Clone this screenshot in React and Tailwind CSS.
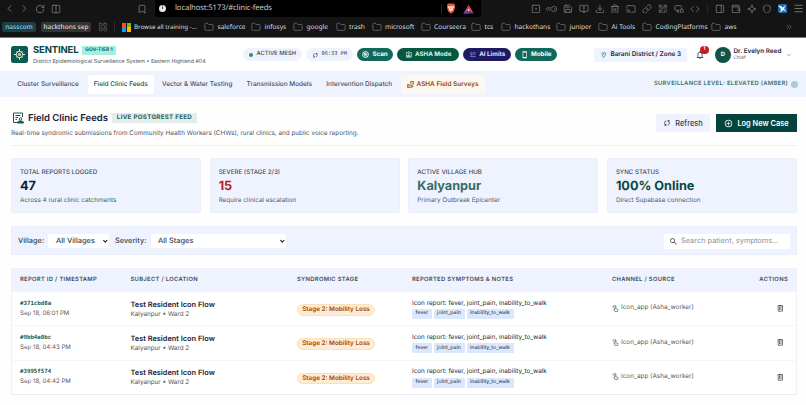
import React from "react";
import {
  ChevronLeft, ChevronRight, RotateCw, Columns2, Bookmark, LayoutGrid, Folder,
  SquareDot, KeyRound, Save, BookOpen, Download, Trash2, Cast, Link, QrCode,
  MonitorSmartphone, Code, PanelRight, Wallet, Sparkle, Shield, Menu, ChevronsRight, ChevronDown,
} from "lucide-react";
import {
  MdOutlineAssignmentInd, MdTune, MdOutlineSmartphone, MdOutlineLocationOn,
  MdOutlineNotifications, MdOutlineAddCircleOutline, MdSearch,
} from "react-icons/md";

const SYNC = "M160-160v-80h110l-16-14q-52-46-73-105t-21-119q0-111 66.5-197.5T400-790v84q-72 26-116 88.5T240-478q0 45 17 87.5t53 78.5l10 10v-98h80v240H160Zm400-10v-84q72-26 116-88.5T720-482q0-45-17-87.5T650-648l-10-10v98h-80v-240h240v80H690l16 14q49 49 71.5 106.5T800-482q0 111-66.5 197.5T560-170Z";
const TRASH = "M280-120q-33 0-56.5-23.5T200-200v-520h-40v-80h200v-40h240v40h200v80h-40v520q0 33-23.5 56.5T680-120H280Zm400-600H280v520h400v-520ZM360-280h80v-360h-80v360Zm160 0h80v-360h-80v360Z";

function Symbol({ d, size, className = "" }) {
  return (
    <svg width={size} height={size} viewBox="0 -960 960 960" fill="currentColor" className={`shrink-0 ${className}`}>
      <path d={d} />
    </svg>
  );
}

const bookmarks = [
  ["saleforce", "w-[47px]"], ["infosys", "w-[42px]"], ["google", "w-[42.5px]"],
  ["trash", "w-[36px]"], ["microsoft", "w-[49px]"], ["Courseera", "w-[50.5px]"],
  ["tcs", "w-[30px]"], ["hackothans", "w-[55px]"], ["juniper", "w-[42px]"],
  ["Ai Tools", "w-[44px]"], ["CodingPlatforms", "w-[69px]"], ["aws", "w-[30px]"],
];

const toolIcons = [SquareDot, KeyRound, Save, BookOpen, Download, Trash2, Cast, Link, QrCode, MonitorSmartphone, Code];
const panelIcons = [PanelRight, Wallet, Sparkle, Shield];

function Chrome() {
  return (
    <div className="h-[38px] bg-[#141414] border-b border-[#77797a] font-['Noto_Sans','Open_Sans',sans-serif]">
      <div className="flex h-[17px] items-center text-[#77777b]">
        <div className="flex w-[155px] items-center pl-[4px]">
          <ChevronLeft size={11} className="mr-[4px] shrink-0" />
          <ChevronRight size={11} className="mr-[5px] shrink-0" />
          <RotateCw size={10} className="mr-[6px] shrink-0" />
          <Columns2 size={10} className="mr-[76px] shrink-0" />
          <Bookmark size={10} className="-mr-4 shrink-0" />
        </div>
        <div className="flex h-[17px] w-[326px] items-center rounded-b-[3px] bg-black">
          <div className="ml-[4px] flex size-[7px] items-center justify-center rounded-full bg-[#e8e8e8] text-[5px] font-bold leading-none text-black">i</div>
          <span className="ml-[9px] w-[255px] pt-[1px] text-[7px] leading-none tracking-[0.18px] text-[#c9c9c9]"><span className="text-[7.7px] tracking-[-0.12px]">localhost:5173/#clinic-feeds</span></span>
          <div className="ml-[11px] h-[10px] w-px bg-[#242424]" />
          <svg className="ml-[4px] h-[11px] w-[10px]" viewBox="0 0 10 11">
            <path d="M2.2.6h5.6l1.4 1.7-.4 1 .3 1.1-1.3 4L5 10.7 2.2 8.4l-1.3-4 .3-1.1-.4-1z" fill="#f0562d" />
            <path d="m2.5 3 1.6.4L5 3l.9.4L7.5 3l.5 1.5-1.4 1.6.2.9L5 8.2 3.2 7l.2-.9L2 4.5z" fill="#fff" />
            <path d="m3.3 4.2 1 .4L4.7 6 5 6.3 5.3 6l.4-1.4 1-.4" fill="none" stroke="#f0562d" strokeWidth=".5" />
          </svg>
          <svg className="ml-[7px] h-[10px] w-[11px]" viewBox="0 0 11 10">
            <path d="M5.5.5.3 9.5h5.2V6.7H4.2l1.3-2.2z" fill="#a53a8c" />
            <path d="M5.5.5v4l1.3 2.2 3.9 2.8z" fill="#ff4f2e" />
            <path d="M.3 9.5h10.4L6.8 6.7H4.2z" fill="#5b3fb0" />
            <path d="m5.5 4.5-1.3 2.2h2.6z" fill="#fff" />
          </svg>
        </div>
        <div className="flex items-center gap-[6px] pl-[50px]">
          {toolIcons.map((I, i) => <I key={i} size={9.9} strokeWidth={2} className={I === KeyRound ? "rotate-45" : ""} />)}
        </div>
        <div className="ml-[7px] h-[10px] w-px bg-[#262626]" />
        <div className="flex items-center gap-[6px] pl-[7px]">
          {panelIcons.map((I, i) => <I key={i} size={9.9} strokeWidth={2} />)}
          <svg className="h-[9px] w-[9px]" viewBox="0 0 9 9">
            <rect width="9" height="9" rx="1.5" fill="#1c69ad" />
            <path d="M0 1.5 3 2l1.5 1.5L8 1 6 4.5 8.5 8 5.5 6 2 8.5 3 5z" fill="#e9f5ff" />
          </svg>
          <Menu size={11} />
        </div>
      </div>
      <div className="flex h-[20px] items-center text-[6.8px] leading-none text-[#dedede]">
        <div className="ml-[2px] flex h-[10px] w-[34px] items-center justify-center rounded-[2px] bg-[#1d3f49] text-[6.5px] font-medium text-[#8bd7ea]">nasscom</div>
        <div className="ml-[5px] flex h-[10px] w-[50px] items-center justify-center rounded-[2px] bg-[#333436] text-[6.5px] font-medium whitespace-nowrap">hackthons sep</div>
        <LayoutGrid size={10} className="ml-[7px] text-[#5c5c60]" />
        <div className="ml-[6px] h-[10px] w-px bg-[#2b2b2b]" />
        <div className="ml-[7px] grid size-[9px] grid-cols-2 gap-[0.5px]">
          <i className="bg-[#f25022]" /><i className="bg-[#7fba00]" /><i className="bg-[#00a4ef]" /><i className="bg-[#ffb900]" />
        </div>
        <span className="ml-[3px] w-[70px] text-[6.2px] whitespace-nowrap">Browse all training -...</span>
        {bookmarks.map(([t, w]) => (
          <div key={t} className={`flex shrink-0 items-center gap-[3.5px] text-[6.6px] whitespace-nowrap ${w}`}>
            <Folder size={10} strokeWidth={1.7} className="shrink-0 text-[#77777b]" />{t}
          </div>
        ))}
        <ChevronsRight size={8} className="ml-[44px] shrink-0 text-[#77777b]" />
      </div>
    </div>
  );
}

function ScanIcon() {
  return (
    <svg className="h-[7px] w-[7px]" viewBox="0 0 14 14" fill="none" stroke="currentColor" strokeWidth="1.6">
      <circle cx="7" cy="7" r="6" /><circle cx="7" cy="7" r="3.2" /><path d="M7 7 3.5 3M10 10l2 2" />
      <circle cx="7" cy="7" r="1.2" fill="currentColor" />
    </svg>
  );
}

function Header() {
  const pill = "flex h-[13.5px] shrink-0 items-center justify-center gap-[3px] rounded-full pt-[0.5px] whitespace-nowrap";
  return (
    <header className="flex h-[33px] items-center bg-white pl-[11px]">
      <svg className="h-[17px] w-[17px] shrink-0" viewBox="0 0 34 34">
        <rect width="34" height="34" rx="5" fill="#0c5b50" />
        <g fill="none" stroke="#cfeee6" strokeWidth="2">
          <circle cx="17" cy="17" r="6.5" />
          <path d="M17 6v5M17 23v5M6 17h5M23 17h5M11 11l2 2M23 11l-2 2M11 23l2-2M23 23l-2-2" />
        </g>
        <circle cx="17" cy="17" r="3.5" fill="#f3b33d" />
      </svg>
      <div className="ml-[5px] w-[210px] shrink-0 pt-[1.5px]">
        <div className="flex h-[12px] items-center">
          <span className="w-[49px] text-[9.5px] font-bold leading-none tracking-[-0.15px] text-[#07473f]">SENTINEL</span>
          <span className="flex h-[9px] w-[34px] items-center justify-center bg-[#a5efe0] text-[4.9px] font-bold leading-none tracking-[0.1px] text-[#0b5f54] whitespace-nowrap">GOV-TIER 1</span>
        </div>
        <div className="mt-[1px] h-[8px] text-[5.35px] leading-[8px] text-[#50565e] whitespace-nowrap">District Epidemiological Surveillance System • Eastern Highland #04</div>
      </div>
      <div className={`${pill} w-[59px] bg-[#eff3ff] text-[5.8px] font-medium text-[#3c4652]`}>
        <i className="size-[4.5px] rounded-full bg-[#40857a]" />ACTIVE MESH
      </div>
      <div className={`${pill} ml-[4px] w-[47px] bg-[#eff3ff] font-['DejaVu_Sans_Mono',monospace] text-[5.3px] text-[#3c4652]`}>
        <Symbol d={SYNC} size={6.5} />06:33 PM
      </div>
      <div className={`${pill} ml-[4px] w-[36px] bg-[#11695c] text-[6.2px] font-bold text-white`}><ScanIcon />Scan</div>
      <div className={`${pill} ml-[4px] w-[62px] bg-[#07563f] text-[6.2px] font-bold text-[#d9f8e8]`}><MdOutlineAssignmentInd size={7.5} />ASHA Mode</div>
      <div className={`${pill} ml-[4px] w-[48px] bg-[#201a62] text-[6.2px] font-bold text-[#dfe1ff]`}><MdTune size={7.5} className="text-[#8d91e8]" />AI Limits</div>
      <div className={`${pill} ml-[4px] w-[42px] bg-[#11695c] text-[6.2px] font-bold text-white`}><MdOutlineSmartphone size={7.5} />Mobile</div>
      <div className="ml-[37px] flex h-[14px] w-[93px] shrink-0 items-center justify-center gap-[3px] rounded-[2px] bg-[#eff3ff] pt-[0.5px] text-[6.4px] font-semibold text-[#1c2a3c] whitespace-nowrap">
        <MdOutlineLocationOn size={7.5} className="text-[#40857a]" />Barani District / Zone 3
      </div>
      <div className="relative ml-[8px] w-[10px] shrink-0">
        <MdOutlineNotifications size={10} className="mt-[1px] text-[#444b52]" />
        <span className="absolute -top-[3.5px] left-[5px] flex size-[8.5px] items-center justify-center rounded-full bg-[#c51b1f] text-[5px] font-bold leading-none text-white">1</span>
      </div>
      <div className="ml-[10px] flex size-[16px] shrink-0 items-center justify-center rounded-full bg-[#0f5447] text-[6px] font-bold text-white">D</div>
      <div className="ml-[2.5px] w-[52px] shrink-0 whitespace-nowrap">
        <div className="text-[6.35px] font-semibold leading-[8px] text-[#17243a]">Dr. Evelyn Reed</div>
        <div className="text-[4.9px] leading-[7px] text-[#676d75]">Chief</div>
      </div>
      <ChevronDown size={6} className="text-[#555]" />
    </header>
  );
}

const tabs = [
  ["Cluster Surveillance", "ml-[11px] w-[74px]"],
  ["Field Clinic Feeds", "ml-[2.5px] w-[66.5px] bg-white text-[#0d5348]"],
  ["Vector & Water Testing", "ml-[2px] w-[82.5px]"],
  ["Transmission Models", "ml-[2px] w-[77.5px]"],
  ["Intervention Dispatch", "ml-[2px] w-[78.5px]"],
];

function SurveyIcon() {
  return (
    <svg className="h-[7px] w-[7px]" viewBox="0 0 14 14" fill="none" stroke="currentColor" strokeWidth="1.5">
      <path d="M1 7h3v6H1zM4 8h3l3 1.5H7M4 12l4 1 5-2.5-1-1L9 11M7 5V1h6v5H9M9 3.5h2" />
    </svg>
  );
}

function Nav() {
  return (
    <nav className="flex h-[26px] items-center bg-[#eff3ff] text-[6.45px] font-medium text-[#424c55] whitespace-nowrap">
      {tabs.map(([t, c]) => (
        <div key={t} className={`flex h-[19px] shrink-0 items-center justify-center rounded-[1px] pt-[1px] ${c}`}>{t}</div>
      ))}
      <div className="ml-[2px] flex h-[19px] w-[84px] shrink-0 items-center justify-center gap-[3px] rounded-[1px] bg-[#fcf8f0] pt-[1px] font-semibold text-[#9b4713]"><SurveyIcon />ASHA Field Surveys</div>
      <div className="ml-auto flex items-center gap-[3px] pr-[8px] pt-[1px] text-[5.85px] font-semibold tracking-[0.3px] text-[#40716c]">
        SURVEILLANCE LEVEL: ELEVATED (AMBER)<i className="size-[7px] rounded-full bg-[#a6cfca]" />
      </div>
    </nav>
  );
}

function PageTitle() {
  return (
    <section className="mr-[9px] ml-[11px] flex h-[48.5px] justify-between border-b border-[#f0f1f4]">
      <div className="pt-[14px]">
        <div className="flex h-[14px] items-center">
          <svg className="ml-[1px] h-[12px] w-[12px]" viewBox="0 0 24 24" fill="none" stroke="#1d5b52" strokeWidth="2">
            <path d="M10 21H3V2h18v8M7 7h10M7 11h5M7 15h3" />
            <circle cx="17" cy="14" r="2.5" /><path d="M11 22v-2c2-2.5 10-2.5 12 0v2z" fill="#1d5b52" />
          </svg>
          <span className="ml-[4px] w-[84px] pt-[1px] text-[9.5px] font-semibold leading-none tracking-[-0.03px] text-[#14223a] whitespace-nowrap">Field Clinic Feeds</span>
          <span className="flex h-[10px] w-[85px] items-center justify-center bg-[#e3edec] text-[6.2px] font-bold leading-none tracking-[0.3px] text-[#245f57] whitespace-nowrap">LIVE POSTGREST FEED</span>
        </div>
        <div className="mt-[3.5px] text-[6.35px] leading-[9px] text-[#51575f] whitespace-nowrap">Real-time syndromic submissions from Community Health Workers (CHWs), rural clinics, and public voice reporting.</div>
      </div>
      <div className="flex gap-[6px] pt-[17px] whitespace-nowrap">
        <button className="flex h-[18px] w-[54px] items-center justify-center gap-[4px] bg-[#eff3ff] pt-[0.5px] text-[7.4px] font-medium text-[#363f49]"><Symbol d={SYNC} size={8} />Refresh</button>
        <button className="flex h-[18px] w-[81px] items-center justify-center gap-[4px] bg-[#04443c] pt-[0.5px] text-[7.4px] font-semibold text-white"><MdOutlineAddCircleOutline size={9} />Log New Case</button>
      </div>
    </section>
  );
}

const stats = [
  ["TOTAL REPORTS LOGGED", "47", "Across 4 rural clinic catchments", "text-[#0d1b30]", "text-[#2c6b65]"],
  ["SEVERE (STAGE 2/3)", "15", "Require clinical escalation", "text-[#ba1d25]", "text-[#555b63]"],
  ["ACTIVE VILLAGE HUB", "Kalyanpur", "Primary Outbreak Epicenter", "text-[#376b68]", "text-[#555b63]"],
  ["SYNC STATUS", "100% Online", "Direct Supabase connection", "text-[#07483f]", "text-[#555b63]"],
];

function Stats() {
  return (
    <section className="mt-[12.5px] mr-[9px] ml-[11px] grid grid-cols-4 gap-[8.5px] whitespace-nowrap">
      {stats.map(([a, b, c, k, n]) => (
        <div key={a} className="h-[55px] rounded-[2px] border border-[#eaeffb] bg-[#eff3ff] pl-[8px] pt-[8.5px]">
          <div className="text-[6.2px] font-medium leading-[9px] text-[#424a54]">{a}</div>
          <div className={`mt-[1.5px] text-[12.7px] font-bold leading-[18px] ${k}`}>{b}</div>
          <div className={`text-[6.35px] leading-[9px] ${n}`}>{c}</div>
        </div>
      ))}
    </section>
  );
}

function Filters() {
  return (
    <section className="mt-[13px] mr-[9px] ml-[11px] flex h-[29px] items-center rounded-[1px] border border-[#eaeffb] bg-[#eff3ff] pt-[1px] text-[7.4px] font-medium text-[#3b444e] whitespace-nowrap">
      <span className="ml-[6px] w-[30px]">Village:</span>
      <div className="flex h-[14px] w-[61px] items-center justify-between rounded-[1px] bg-white pr-[1px] pl-[8px]">All Villages<ChevronDown size={6.5} strokeWidth={4} className="text-[#222]" /></div>
      <span className="ml-[6px] w-[36px]">Severity:</span>
      <div className="flex h-[14px] w-[135px] items-center justify-between rounded-[1px] bg-white pr-[1px] pl-[7px]">All Stages<ChevronDown size={6.5} strokeWidth={4} className="text-[#222]" /></div>
      <div className="ml-auto mr-[6px] flex h-[15px] w-[126px] items-center gap-[3px] rounded-[1px] bg-white pl-[5px] font-normal text-[#8a9099]"><MdSearch size={9} className="text-[#444]" />Search patient, symptoms...</div>
    </section>
  );
}

const rows = [["#371cbd8a", "Sep 18, 06:01 PM"], ["#9bb4e0bc", "Sep 18, 04:43 PM"], ["#3995f574", "Sep 18, 04:42 PM"]];
const cols = "grid grid-cols-[110.5px_166.5px_115px_200px_1fr] pl-[8px] whitespace-nowrap";

function TouchIcon() {
  return (
    <svg className="mr-[2px] h-[7px] w-[7px] shrink-0" viewBox="0 0 14 14" fill="none" stroke="currentColor" strokeWidth="1.3">
      <path d="M3 5.500a3 3 0 1 1 5-1M5.500 4v6L3.500 9l2.500 4h5l1-4-4.500-1.500V4a1 1 0 0 0-2 0" />
    </svg>
  );
}

function Table() {
  return (
    <section className="mt-[13px] mr-[9px] ml-[11px] h-[127px] rounded-[1px] border border-[#eff1f5] border-b-[#e9ebef] bg-white">
      <div className={`${cols} h-[23px] items-center bg-[#eff3ff] pt-[0.5px] text-[5.8px] font-semibold tracking-[0.33px] text-[#454e58]`}>
        <span>REPORT ID / TIMESTAMP</span><span>SUBJECT / LOCATION</span><span>SYNDROMIC STAGE</span><span>REPORTED SYMPTOMS &amp; NOTES</span>
        <div className="flex justify-between pr-[8px]"><span>CHANNEL / SOURCE</span><span>ACTIONS</span></div>
      </div>
      {rows.map(([id, time]) => (
        <div key={id} className={`${cols} h-[34.3px] border-b border-[#f5f6f9] last:border-b-0`}>
          <div className="pt-[7.5px]">
            <div className="font-['DejaVu_Sans_Mono',monospace] text-[5.75px] font-bold leading-[9px] text-[#175a50]">{id}</div>
            <div className="text-[6.1px] leading-[9px] text-[#555b63]">{time}</div>
          </div>
          <div className="pt-[7.5px]">
            <div className="text-[7.4px] font-semibold leading-[10px] text-[#17243a]">Test Resident Icon Flow</div>
            <div className="text-[6.35px] leading-[9px] text-[#4d545d]">Kalyanpur • Ward 2</div>
          </div>
          <div className="pt-[12px]">
            <span className="flex h-[11.5px] w-[78px] items-center justify-center rounded-full border border-[#f9dfba] bg-[#feedd3] text-[6.35px] font-semibold text-[#a6480e]">Stage 2: Mobility Loss</span>
          </div>
          <div className="pt-[5.5px]">
            <div className="text-[6.33px] leading-[10px] text-[#222d3d]">Icon report: fever, joint_pain, inability_to_walk</div>
            <div className="mt-[1.500px] flex gap-[2px] text-[5.2px] font-medium text-[#414c60]">
              <span className="flex h-[10px] w-[19.5px] items-center justify-center rounded-[1px] bg-[#dbe7fd] pt-[0.5px]">fever</span>
              <span className="flex h-[10px] w-[31px] items-center justify-center rounded-[1px] bg-[#dbe7fd] pt-[0.5px]">joint_pain</span>
              <span className="flex h-[10px] w-[47px] items-center justify-center rounded-[1px] bg-[#dbe7fd] pt-[0.5px]">inability_to_walk</span>
            </div>
          </div>
          <div className="flex h-[32.5px] items-center text-[6.4px] text-[#555b63]">
            <TouchIcon />Icon_app (Asha_worker)
            <Symbol d={TRASH} size={8.5} className="mr-[12px] ml-auto text-[#3b434c]" />
          </div>
        </div>
      ))}
    </section>
  );
}

export default function App() {
  return (
    <div className="h-[405px] w-[806px] overflow-hidden bg-[#fefeff] font-[Inter,sans-serif] [text-rendering:geometricPrecision]">
      <Chrome />
      <Header />
      <Nav />
      <PageTitle />
      <Stats />
      <Filters />
      <Table />
    </div>
  );
}
